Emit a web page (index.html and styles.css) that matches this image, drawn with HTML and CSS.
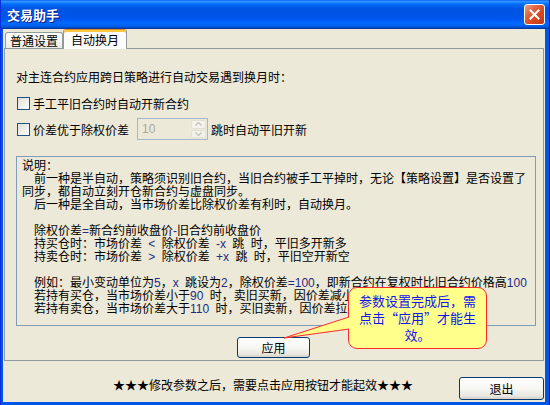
FILE: index.html
```html
<!DOCTYPE html>
<html lang="zh-CN">
<head>
  <meta charset="UTF-8" />
  <meta name="viewport" content="width=device-width, initial-scale=1.0"/>
  <title>交易助手</title>
  <link rel="stylesheet" href="styles.css">
</head>
<body>

  <div class="window">
    <!-- Title bar -->
    <div class="titlebar">
      <span class="title">交易助手</span>
      <span class="close-btn">
        <svg width="11" height="11" viewBox="0 0 11 11">
          <path d="M1.5 1.5 L9.5 9.5 M9.5 1.5 L1.5 9.5" stroke="#fff" stroke-width="2" stroke-linecap="square"/>
        </svg>
      </span>
    </div>

    <div class="client">
      <!-- Tabs -->
      <div class="tabs">
        <div class="tab">普通设置</div>
        <div class="tab active">自动换月</div>
      </div>

      <div class="panel">
        <p class="lead">对主连合约应用跨日策略进行自动交易遇到换月时：</p>

        <div class="check-row">
          <span class="checkbox"></span>手工平旧合约时自动开新合约
        </div>

        <div class="check-row row2">
          <span class="checkbox"></span>价差优于除权价差
          <span class="spin">
            <span class="spin-val">10</span>
            <span class="spin-btns">
              <span class="spin-btn">
                <svg width="7" height="4" viewBox="0 0 7 4"><path d="M0.5 3.5 L3.5 0.5 L6.5 3.5" fill="none" stroke="#C4C2B6" stroke-width="1.2"/></svg>
              </span>
              <span class="spin-btn">
                <svg width="7" height="4" viewBox="0 0 7 4"><path d="M0.5 0.5 L3.5 3.5 L6.5 0.5" fill="none" stroke="#C4C2B6" stroke-width="1.2"/></svg>
              </span>
            </span>
          </span>跳时自动平旧开新
        </div>

        <!-- Description memo -->
        <div class="memo">
          <div>说明：</div>
          <div class="ind">前一种是半自动，策略须识别旧合约，当旧合约被手工平掉时，无论【策略设置】是否设置了</div>
          <div>同步，都自动立刻开仓新合约与虚盘同步。</div>
          <div class="ind">后一种是全自动，当市场价差比除权价差有利时，自动换月。</div>
          <div class="blank"></div>
          <div class="ind">除权价差<span class="asc">=</span>新合约前收盘价<span class="asc">-</span>旧合约前收盘价</div>
          <div class="ind">持买仓时：市场价差 <span class="asc">&lt;</span> 除权价差 <span class="asc">-x</span> 跳 时，平旧多开新多</div>
          <div class="ind">持卖仓时：市场价差 <span class="asc">&gt;</span> 除权价差 <span class="asc">+x</span> 跳 时，平旧空开新空</div>
          <div class="blank"></div>
          <div class="ind">例如：最小变动单位为<span class="asc">5</span>，<span class="asc">x</span> 跳设为<span class="asc">2</span>，除权价差<span class="asc">=100</span>，即新合约在复权时比旧合约价格高<span class="asc">100</span></div>
          <div class="ind">若持有买仓，当市场价差小于<span class="asc">90</span> 时，卖旧买新，因价差减小获利。</div>
          <div class="ind">若持有卖仓，当市场价差大于<span class="asc">110</span> 时，买旧卖新，因价差拉大获利。</div>
        </div>

        <button class="btn apply">应用</button>
      </div>

      <div class="footer">
        <span class="notice">★★★修改参数之后，需要点击应用按钮才能起效★★★</span>
        <button class="btn exit">退出</button>
      </div>
    </div>

    <!-- Balloon hint -->
    <div class="balloon">参数设置完成后，需<br>点击“应用”才能生<br>效。</div>
    <svg class="balloon-tail" width="74" height="30" viewBox="0 0 74 30">
      <polygon points="3,26 68,5 72,5 72,17 68,17" fill="#FFFF8C"/>
      <polyline points="68,5 3,26 68,17" fill="none" stroke="#FF2A2A" stroke-width="1"/>
    </svg>
  </div>

</body>
</html>
```

FILE: styles.css
```css
body {
  margin: 0;
  font-family: "Noto Sans CJK SC", sans-serif;
  font-size: 12px;
  color: #000;
}

.window {
  position: relative;
  width: 550px;
  height: 405px;
  background: #0055E5;
  display: flex;
  flex-direction: column;
  box-sizing: border-box;
  border-left: 1px solid #0831D9;
  border-right: 1px solid #001EA0;
}

.titlebar {
  height: 29px;
  flex: none;
  display: flex;
  align-items: center;
  justify-content: space-between;
  padding: 0 4px 0 6px;
  background: linear-gradient(to bottom,
    #0058EE 0%, #3593FF 4%, #288EFF 7%, #127DFF 10%, #036FFC 14%,
    #0262EE 20%, #0057E5 28%, #0054E3 36%, #0055EB 60%, #005BF5 70%,
    #026AFE 80%, #0062EF 88%, #0052D6 94%, #0040AB 97%, #003092 100%);
}

.title {
  color: #fff;
  font-weight: bold;
  font-size: 13px;
  line-height: 16px;
  text-shadow: 1px 1px #0A1883;
}

.close-btn {
  width: 21px;
  height: 21px;
  box-sizing: border-box;
  border: 1px solid #fff;
  border-radius: 3px;
  background: linear-gradient(135deg, #EFA08A 0%, #E0633F 35%, #D4481F 65%, #BE3A17 100%);
  display: flex;
  align-items: center;
  justify-content: center;
}

.client {
  flex: 1;
  margin: 0 4px 3px 2px;
  background: #ECE9D8;
  display: flex;
  flex-direction: column;
}

.tabs {
  display: flex;
  align-items: flex-end;
  height: 19px;
  flex: none;
  padding-left: 2px;
  position: relative;
  z-index: 1;
}

.tab {
  width: 58px;
  height: 16px;
  box-sizing: border-box;
  border: 1px solid #919B9C;
  border-bottom: none;
  border-radius: 3px 3px 0 0;
  background: linear-gradient(#FFFFFF, #F3F3EF 60%, #ECEBE6);
  text-align: center;
  line-height: 15px;
}

.tab.active {
  width: 64px;
  height: 20px;
  margin-bottom: -1px;
  padding-top: 2px;
  border-top-color: #E68B2C;
  background: #FCFCFE;
  box-shadow: inset 0 2px 0 #FFC73C;
}

.panel {
  height: 313px;
  flex: none;
  box-sizing: border-box;
  margin: 0 1px;
  border: 1px solid #919B9C;
  padding-left: 11px;
}

.lead {
  margin: 20px 0 0;
  line-height: 16px;
}

.check-row {
  display: flex;
  align-items: center;
  height: 16px;
  margin-top: 10px;
}

.row2 {
  height: 22px;
  margin-top: 7px;
}

.checkbox {
  width: 13px;
  height: 13px;
  box-sizing: border-box;
  margin: 0 3px 0 1px;
  border: 1px solid #1C5180;
  background: linear-gradient(135deg, #DCDCD7, #FFFFFF);
}

.spin {
  width: 71px;
  height: 22px;
  box-sizing: border-box;
  margin: 0 3px 0 8px;
  border: 1px solid #A5B7CF;
  background: #ECE9D8;
  display: flex;
}

.spin-val {
  flex: 1;
  padding-left: 4px;
  color: #ACA899;
  font-family: "Liberation Sans", sans-serif;
  line-height: 20px;
}

.spin-btns {
  width: 15px;
  padding: 1px 1px 1px 0;
  display: flex;
  flex-direction: column;
  gap: 1px;
}

.spin-btn {
  flex: 1;
  border: 1px solid #E3E1D6;
  border-radius: 2px;
  background: #F3F2EC;
  display: flex;
  align-items: center;
  justify-content: center;
}

/* Liberation Sans first: its short metrics keep the 13px lines from overlapping,
   CJK glyphs still fall back to Noto */
.memo {
  margin-top: 16px;
  width: 520px;
  height: 170px;
  box-sizing: border-box;
  border: 1px solid #7F9DB9;
  padding: 3px 5px;
  font-family: "Liberation Sans", "Noto Sans CJK SC", sans-serif;
  line-height: 13px;
  white-space: nowrap;
  overflow: hidden;
  word-spacing: 3px;
}

.memo > div {
  height: 13px;
}

.memo .ind {
  padding-left: 12px;
}

.asc {
  color: #1E2C86;
}

.btn {
  font-family: "Noto Sans CJK SC", sans-serif;
  font-size: 12px;
  color: #000;
  padding: 0;
  border: 1px solid #003C74;
  border-radius: 3px;
  background: linear-gradient(#FFFFFF, #F5F5F1 55%, #E8E7E0 85%, #D6D0C5);
}

.apply {
  display: block;
  width: 73px;
  height: 21px;
  margin: 11px 0 0 221px;
}

.footer {
  flex: 1;
  display: flex;
  align-items: flex-start;
  padding-top: 16px;
}

.notice {
  margin-left: 110px;
  line-height: 16px;
}

.exit {
  width: 85px;
  height: 23px;
  margin-left: auto;
  margin-right: 1px;
}

.balloon {
  position: absolute;
  left: 347px;
  top: 287px;
  width: 139px;
  height: 62px;
  box-sizing: border-box;
  padding-top: 4px;
  border: 1px solid #FF2A2A;
  border-radius: 9px;
  background: #FFFF8C;
  color: #1414F0;
  font-size: 13px;
  line-height: 17px;
  text-align: center;
}

.balloon-tail {
  position: absolute;
  left: 280px;
  top: 312px;
}
```
